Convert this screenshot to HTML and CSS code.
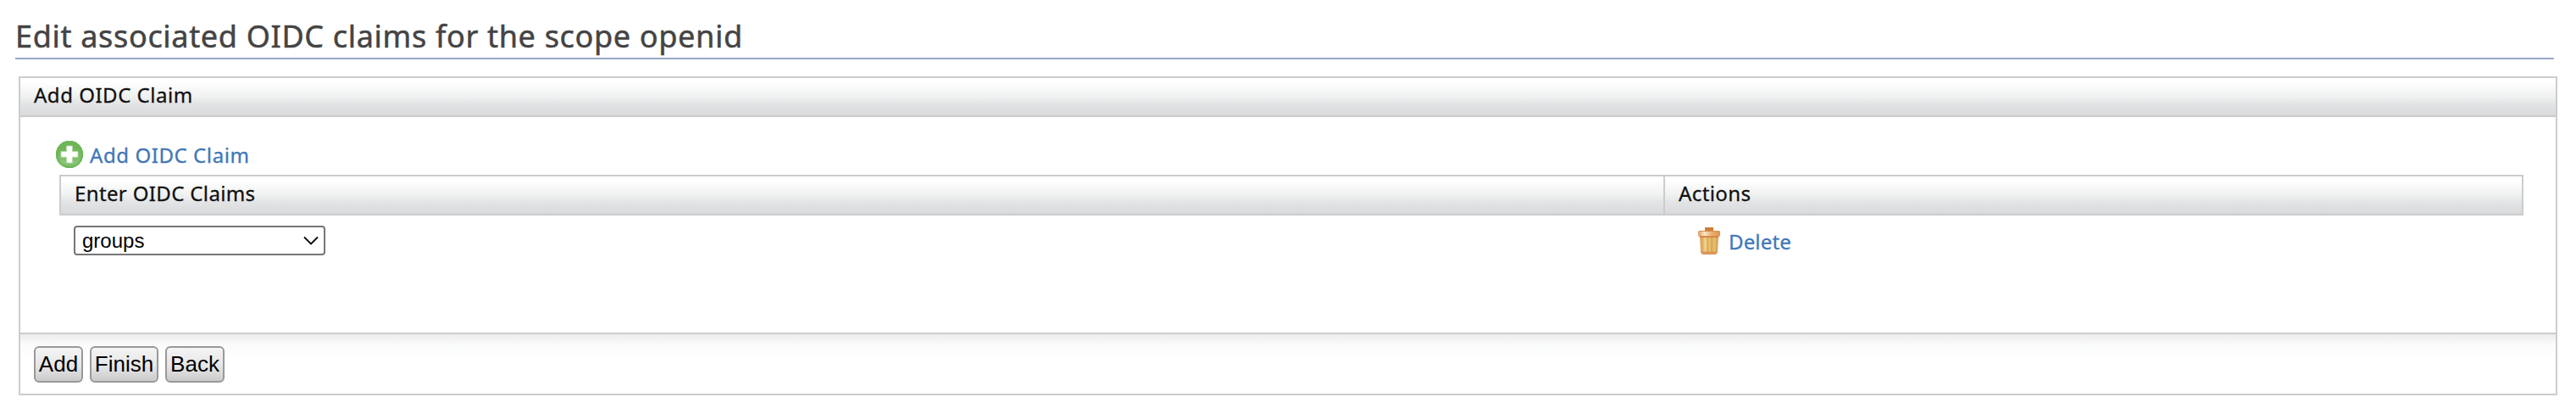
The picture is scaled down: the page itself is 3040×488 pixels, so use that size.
FILE: index.html
```html
<!DOCTYPE html>
<html lang="en">
<head>
<meta charset="utf-8">
<title>Edit OIDC claims</title>
<link rel="stylesheet" href="styles.css">
</head>
<body>
<h2 class="title"><span>Edit associated OIDC claims for the scope openid</span></h2>
<main class="panel">
  <div class="bar"><span class="t-head">Add OIDC Claim</span></div>
  <div class="body">
    <a class="link add-link">
      <svg width="32" height="32" viewBox="0 0 32 32">
        <defs><linearGradient id="g" x1="0" y1="0" x2="0" y2="1"><stop offset="0" stop-color="#6cb356"/><stop offset=".5" stop-color="#74b85f"/><stop offset=".8" stop-color="#8cc47a"/><stop offset="1" stop-color="#6eb658"/></linearGradient></defs>
        <circle cx="16" cy="16" r="16.3" fill="url(#g)"/>
        <circle cx="16" cy="16" r="15" fill="none" stroke="#6eb658" stroke-width="2"/>
        <path d="M12.600 6h6.800v6.600H26v6.600h-6.600V26h-6.800v-6.800H6v-6.600h6.600z" fill="#fff" stroke="#b5dba9" stroke-width="1"/>
      </svg>
      <span class="t-link">Add OIDC Claim</span>
    </a>
    <div class="claims">
      <div class="bar row-head">
        <div class="c1"><span class="t-enter">Enter OIDC Claims</span></div>
        <div class="c2"><span class="t-act">Actions</span></div>
      </div>
      <div class="row">
        <div class="r1">
          <div class="select"><span>groups</span>
            <svg width="18" height="12" viewBox="0 0 18 12"><path d="M1 1.500L9 9.500 17 1.500" fill="none" stroke="#000" stroke-width="1.800"/></svg>
          </div>
        </div>
        <a class="link delete">
          <svg width="28" height="32" viewBox="0 0 28 32">
            <defs>
              <linearGradient id="b"><stop offset="0" stop-color="#d99a55"/><stop offset=".18" stop-color="#e3b566"/><stop offset=".3" stop-color="#f1d998"/><stop offset=".42" stop-color="#d9a552"/><stop offset=".52" stop-color="#e9c877"/><stop offset=".64" stop-color="#d6a252"/><stop offset=".76" stop-color="#e6c475"/><stop offset="1" stop-color="#d6954f"/></linearGradient>
              <linearGradient id="l"><stop offset="0" stop-color="#e0a060"/><stop offset=".3" stop-color="#fae3c8"/><stop offset=".65" stop-color="#e8ab6a"/><stop offset="1" stop-color="#dc9750"/></linearGradient>
            </defs>
            <path d="M9 0h10v5H9z" fill="#cd8138"/>
            <path d="M3 10h22l-1 19q-1 3-4 3H8q-3 0-4-3z" fill="url(#b)"/>
            <path d="M4 28.500h20q-1 3.500-4 3.500H8q-3 0-4-3.500z" fill="#dc9657"/>
            <path d="M3 10.500h22v1.500H3z" fill="#c88442"/>
            <path d="M2 4h24q1 0 1 1.500V9q0 2-2 2H3q-2 0-2-2V5.500Q1 4 2 4z" fill="url(#l)"/>
            <path d="M2 4.500h24M2 10.500h24" stroke="#d98f4a" fill="none"/>
          </svg>
          <span class="t-del">Delete</span>
        </a>
      </div>
    </div>
  </div>
  <div class="footer">
    <button class="btn add">Add</button>
    <button class="btn finish">Finish</button>
    <button class="btn back">Back</button>
  </div>
</main>
</body>
</html>
```
FILE: styles.css
```css
* { box-sizing: border-box; }
body { margin: 0; height: 488px; overflow: hidden; background: #fff; font: 24px "Noto Sans", sans-serif; color: #111; }
svg { display: block; flex: none; }
span { white-space: nowrap; }
.title { margin: 0 26px 0 18px; height: 70px; padding-top: 17px; border-bottom: 2px solid #98a6c8; font-size: 36px; font-weight: 400; line-height: 52px; color: #444; letter-spacing: .68px; -webkit-text-stroke: .5px #444; }
.panel { margin: 20px 22px 0; height: 376px; border: 2px solid #ccc; display: flex; flex-direction: column; }
.bar { height: 46px; padding: 0 16px 5px; display: flex; align-items: center; border-bottom: 2px solid #ccc; background: linear-gradient(#fff 10%, #eff1f0 50%, #e3e4e6 68%, #d9dadc); }
.t-head, .t-enter, .t-act { -webkit-text-stroke: .3px #111; }
.t-head { letter-spacing: .52px; }
.t-link { letter-spacing: .58px; -webkit-text-stroke: .3px #3f77b8; }
.t-enter { letter-spacing: .36px; }
.t-act { letter-spacing: .4px; }
.t-del { letter-spacing: .15px; -webkit-text-stroke: .3px #3f77b8; }
.body { flex: 1; padding: 28px 38px 0 42px; }
.link { display: flex; align-items: center; color: #3f77b8; }
.add-link { height: 32px; gap: 8px; }
.claims { margin: 8px 0 0 4px; }
.row-head { height: 48px; border: 2px solid #ccc; padding: 0; align-items: stretch; }
.c1, .c2 { display: flex; align-items: center; padding: 0 16px 5px; }
.c1 { width: 1893px; border-right: 2px solid #ccc; }
.row { display: flex; padding-top: 12px; }
.r1 { width: 1933px; padding-left: 17px; }
.select { width: 297px; height: 35px; border: 2px solid #767676; border-radius: 4px; display: flex; align-items: center; justify-content: space-between; padding: 0 6px 0 8px; font-family: "Liberation Sans", Arial, sans-serif; color: #000; }
.delete { height: 32px; gap: 9px; margin-top: 2px; }
.footer { height: 72px; border-top: 2px solid #ccc; padding: 14px 16px; display: flex; gap: 8px; background: linear-gradient(#ececec, #f9fbfa 12px, #fdfdfd 22px, #fff 30px); }
.btn { height: 43px; padding: 0; border: 2px solid #999; border-radius: 6px; background: linear-gradient(#f4f4f4, #e6e6e6 55%, #cbcbcb); font: 26px "Liberation Sans", Arial, sans-serif; color: #000; }
.add { width: 58px; }
.finish { width: 81px; }
.back { width: 70px; }
```
